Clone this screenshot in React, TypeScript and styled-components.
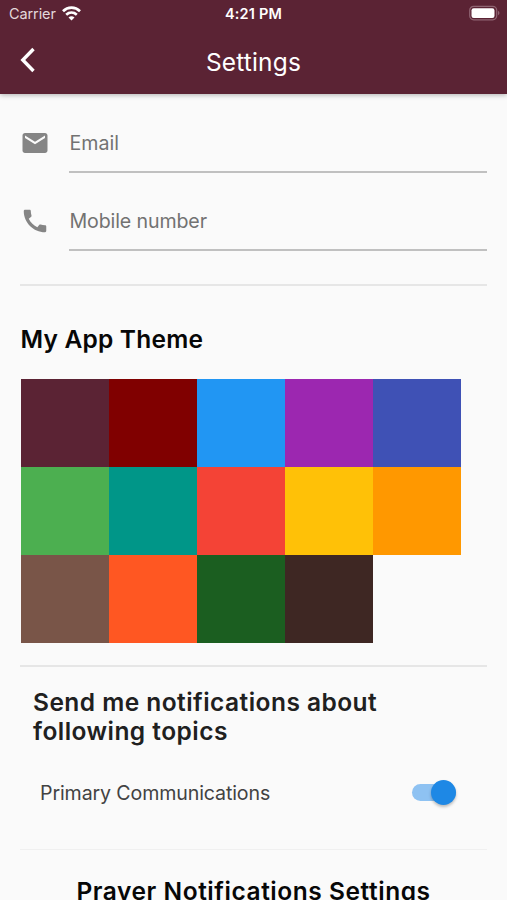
import React from 'react';
import styled, { createGlobalStyle } from 'styled-components';

const GlobalStyle = createGlobalStyle`
  * { box-sizing: border-box; }
  html, body { margin: 0; height: 900px; overflow: hidden; background: #fafafa; }
  body { font-family: Inter, Roboto, sans-serif; }
`;

const Screen = styled.div`
  width: 507px;
  height: 900px;
  overflow: hidden;
  display: flex;
  flex-direction: column;
  background: #fafafa;
`;

const Header = styled.header`
  flex: none;
  height: 94px;
  background: #5b2334;
  color: #fff;
  box-shadow: 0 1px 5px rgba(0, 0, 0, 0.3);
`;

const StatusBar = styled.div`
  height: 28px;
  display: grid;
  grid-template-columns: 1fr auto 1fr;
  align-items: center;
  padding: 0 7px 0 9px;
`;

const Carrier = styled.div`
  display: flex;
  align-items: center;
  gap: 6px;
  font-size: 14.5px;
  letter-spacing: -0.1px;
  color: #e3d8db;
  margin-top: -1px;
`;

const Clock = styled.div`
  font-size: 14.5px;
  font-weight: 600;
  letter-spacing: 0.2px;
  margin: -1px 2px 0 0;
`;

const BatterySlot = styled.div`
  display: flex;
  justify-content: flex-end;
  margin-top: -2px;
`;

const NavBar = styled.div`
  height: 66px;
  display: grid;
  grid-template-columns: 56px 1fr 56px;
  align-items: center;
`;

const BackButton = styled.button`
  border: 0;
  padding: 0 0 3px 20px;
  background: none;
  color: #fff;
  display: flex;
`;

const Title = styled.h1`
  margin: 2px 0 0;
  text-align: center;
  font-size: 24.5px;
  line-height: 30px;
  font-weight: 400;
  letter-spacing: 0.15px;
`;

const Content = styled.main`
  padding: 29px 20px 0;
  display: flex;
  flex-direction: column;
`;

const Fields = styled.div`
  display: grid;
  row-gap: 28px;
  padding-bottom: 33px;
`;

const Field = styled.label`
  display: grid;
  grid-template-columns: 49px 1fr;
  height: 50px;
`;

const FieldIcon = styled.span`
  display: flex;
  height: 40px;
  align-items: center;
`;

const FieldText = styled.span<{ $spacing: number }>`
  border-bottom: 2px solid #c0c0c0;
  padding-left: 0.5px;
  line-height: 40px;
  font-size: 19.6px;
  letter-spacing: ${(p) => p.$spacing}px;
  color: #727272;
`;

const Divider = styled.hr<{ $faint?: boolean }>`
  width: 100%;
  height: ${(p) => (p.$faint ? 1 : 2)}px;
  margin: 0;
  border: 0;
  background: ${(p) => (p.$faint ? '#f0f0f0' : '#e6e6e6')};
`;

const Heading = styled.h2<{ $color?: string; $spacing?: number }>`
  margin: 0;
  font-size: 24.5px;
  line-height: 29.4px;
  font-weight: 600;
  white-space: nowrap;
  letter-spacing: ${(p) => p.$spacing ?? 0}px;
  color: ${(p) => p.$color ?? '#070707'};
`;

const ThemeSection = styled.section`
  padding: 39px 0 22px;
`;

const ThemeTitle = styled.div`
  padding-left: 0.5px;
`;

const Swatches = styled.div`
  display: grid;
  grid-template-columns: repeat(5, 88px);
  grid-auto-rows: 88px;
  margin: 24.6px 0 0 0.5px;
`;

const Swatch = styled.div<{ $color: string }>`
  background: ${(p) => p.$color};
`;

const TopicSection = styled.section`
  height: 182px;
  padding: 21px 0 0 13px;
`;

const TopicRow = styled.div`
  display: flex;
  align-items: center;
  justify-content: space-between;
  margin-top: 32px;
  padding: 0 31px 0 7px;
  height: 28px;
`;

const TopicLabel = styled.span`
  font-size: 19.6px;
  letter-spacing: -0.12px;
  color: #424242;
`;

const Toggle = styled.span`
  width: 44px;
  height: 17px;
  border-radius: 9px;
  background: #8ec2f2;
  display: flex;
  align-items: center;
  justify-content: flex-end;
`;

const Knob = styled.span`
  width: 25px;
  height: 25px;
  border-radius: 50%;
  background: #1e88e5;
  box-shadow: 0 2px 3px rgba(0, 0, 0, 0.25);
`;

const PrayerSection = styled.section`
  padding-top: 27px;
  display: flex;
  justify-content: center;
`;

const COLORS = [
  '#5b2334', '#800000', '#2196f3', '#9c27b0', '#3f51b5',
  '#4caf50', '#009688', '#f44336', '#ffc107', '#ff9800',
  '#795548', '#ff5722', '#1b5e20', '#3e2723',
];

const Wifi = () => (
  <svg width="19" height="15" viewBox="0 0 19 15" fill="none" stroke="#fff" strokeWidth="2.7">
    <path d="M1 5.2 C5.8 .5 13.2 .5 18 5.2" />
    <path d="M4.2 8.7 C7.3 5.9 11.7 5.9 14.8 8.7" />
    <path d="M9.5 14.4 L6.5 11.4 C8.3 9.9 10.7 9.9 12.5 11.4Z" fill="#fff" stroke="none" />
  </svg>
);

const Battery = () => (
  <svg width="31" height="16" viewBox="0 0 31 16">
    <rect x="0.7" y="1.3" width="27" height="13.5" rx="4" fill="none" stroke="#8f6472" strokeWidth="1.2" />
    <rect x="2.5" y="3.2" width="23" height="9.7" rx="2.2" fill="#fff" />
    <path d="M29 5.8 C31 6.8 31 9.3 29 10.3Z" fill="#8f6472" />
  </svg>
);

const Chevron = () => (
  <svg width="16" height="26" viewBox="0 0 16 26" fill="none" stroke="#fff" strokeWidth="3.4">
    <path d="M13.5 2 L2.8 13 L13.5 24" />
  </svg>
);

const Mail = () => (
  <svg width="30" height="30" viewBox="0 0 24 24" fill="#858585">
    <path d="M20 4H4c-1.1 0-1.99.9-1.99 2L2 18c0 1.1.9 2 2 2h16c1.1 0 2-.9 2-2V6c0-1.1-.9-2-2-2zm0 4l-8 5-8-5V6l8 5 8-5v2z" />
  </svg>
);

const Phone = () => (
  <svg width="30" height="30" viewBox="0 0 24 24" fill="#858585">
    <path d="M20.01 15.38c-1.23 0-2.42-.2-3.53-.56-.35-.12-.74-.03-1.01.24l-1.57 1.97c-2.83-1.35-5.48-3.9-6.89-6.83l1.95-1.66c.27-.28.35-.67.24-1.02-.37-1.11-.56-2.3-.56-3.53 0-.54-.45-.99-.99-.99H4.19C3.65 3 3 3.24 3 3.99 3 13.28 10.73 21 20.01 21c.71 0 .99-.63.99-1.18v-3.45c0-.54-.45-.99-.99-.99z" />
  </svg>
);

export default function App() {
  return (
    <Screen>
      <GlobalStyle />
      <Header>
        <StatusBar>
          <Carrier>Carrier<Wifi /></Carrier>
          <Clock>4:21 PM</Clock>
          <BatterySlot><Battery /></BatterySlot>
        </StatusBar>
        <NavBar>
          <BackButton aria-label="Back"><Chevron /></BackButton>
          <Title>Settings</Title>
        </NavBar>
      </Header>
      <Content>
        <Fields>
          <Field>
            <FieldIcon><Mail /></FieldIcon>
            <FieldText $spacing={0}>Email</FieldText>
          </Field>
          <Field>
            <FieldIcon><Phone /></FieldIcon>
            <FieldText $spacing={-0.12}>Mobile number</FieldText>
          </Field>
        </Fields>
        <Divider />
        <ThemeSection>
          <ThemeTitle><Heading $spacing={0.2}>My App Theme</Heading></ThemeTitle>
          <Swatches>
            {COLORS.map((color) => <Swatch key={color} $color={color} />)}
          </Swatches>
        </ThemeSection>
        <Divider />
        <TopicSection>
          <Heading $color="#202020" $spacing={0.46}>Send me notifications about<br />following topics</Heading>
          <TopicRow>
            <TopicLabel>Primary Communications</TopicLabel>
            <Toggle role="switch" aria-checked="true"><Knob /></Toggle>
          </TopicRow>
        </TopicSection>
        <Divider $faint />
        <PrayerSection>
          <Heading $spacing={0.55}>Prayer Notifications Settings</Heading>
        </PrayerSection>
      </Content>
    </Screen>
  );
}
